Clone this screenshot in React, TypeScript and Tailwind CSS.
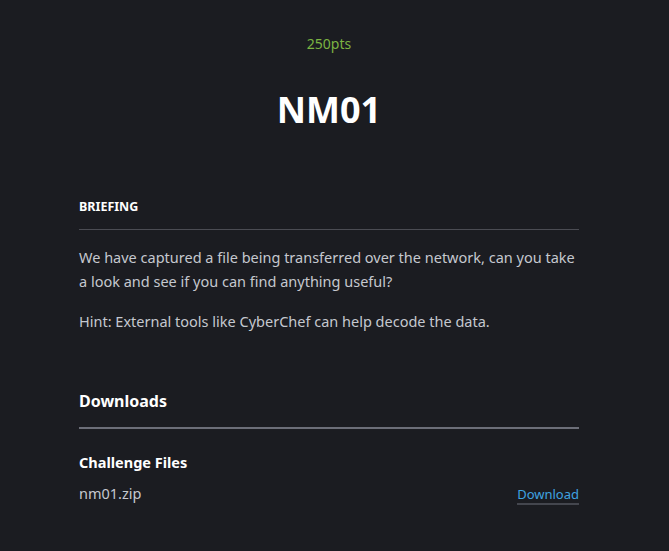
import React from 'react';

export default function App() {
  return (
    <div className="min-h-[551px] w-full bg-[#1b1c21] text-[#c5c8cf]" style={{ fontFamily: '"Noto Sans", "Open Sans", sans-serif' }}>
      <div className="ml-[79px] w-[500px] pt-[34px]">
        <div className="text-center text-[14px] leading-[20px] text-[#7cb342]">250pts</div>
        <h1 className="mt-[34px] text-center text-[36px] font-bold leading-[44px] text-white">NM01</h1>

        <div className="mt-[66px]">
          <h2 className="text-[12.5px] font-bold uppercase leading-[18px] text-white">Briefing</h2>
          <div className="mt-[13px] h-px bg-[#4b4c53]" />
          <p className="mt-[15px] text-[14.5px] leading-[24px]">
            We have captured a file being transferred over the network, can you take a look and see if you can find anything useful?
          </p>
          <p className="mt-[16px] text-[14.5px] leading-[24px]">
            Hint: External tools like CyberChef can help decode the data.
          </p>
        </div>

        <div className="mt-[56px]">
          <h3 className="text-[16px] font-bold leading-[24px] text-white">Downloads</h3>
          <div className="mt-[14px] h-[2px] bg-[#6c6e78]" />
          <h4 className="mt-[22px] text-[14.5px] font-bold leading-[22px] text-white">Challenge Files</h4>
          <div className="mt-[9px] flex items-baseline justify-between text-[14.5px] leading-[22px]">
            <span>nm01.zip</span>
            <a href="#" className="border-b-2 border-[#44464e] text-[13px] leading-[18px] text-[#3fa3e0]">Download</a>
          </div>
        </div>
      </div>
    </div>
  );
}
